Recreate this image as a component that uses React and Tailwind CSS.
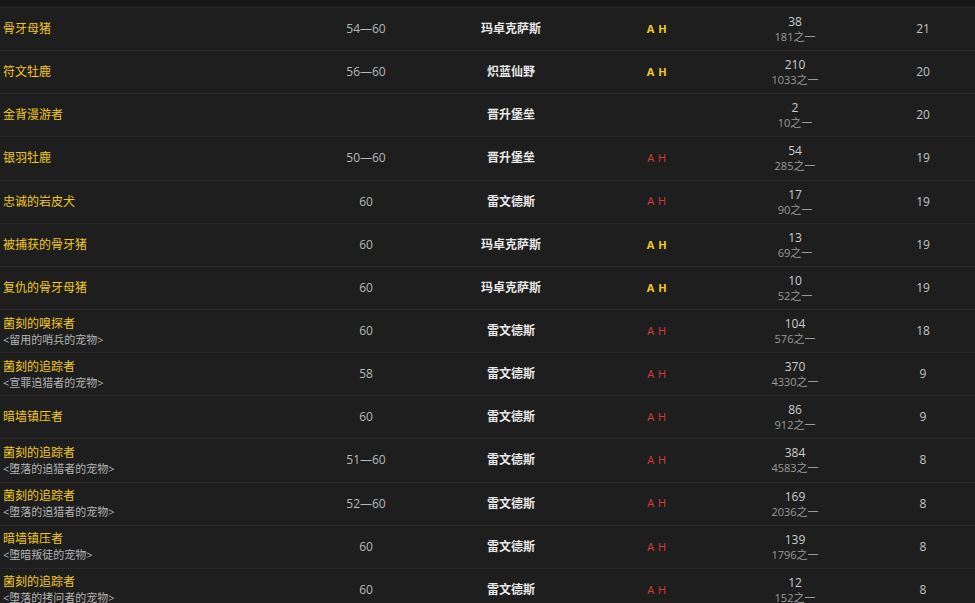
import React from "react";

const rows = [
  { name: "骨牙母猪", level: "54—60", zone: "玛卓克萨斯", ah: "y", count: "38", of: "181", rank: "21" },
  { name: "符文牡鹿", level: "56—60", zone: "炽蓝仙野", ah: "y", count: "210", of: "1033", rank: "20" },
  { name: "金背漫游者", level: "", zone: "晋升堡垒", ah: "", count: "2", of: "10", rank: "20" },
  { name: "银羽牡鹿", level: "50—60", zone: "晋升堡垒", ah: "r", count: "54", of: "285", rank: "19" },
  { name: "忠诚的岩皮犬", level: "60", zone: "雷文德斯", ah: "r", count: "17", of: "90", rank: "19" },
  { name: "被捕获的骨牙猪", level: "60", zone: "玛卓克萨斯", ah: "y", count: "13", of: "69", rank: "19" },
  { name: "复仇的骨牙母猪", level: "60", zone: "玛卓克萨斯", ah: "y", count: "10", of: "52", rank: "19" },
  { name: "菌刻的嗅探者", sub: "<留用的哨兵的宠物>", level: "60", zone: "雷文德斯", ah: "r", count: "104", of: "576", rank: "18" },
  { name: "菌刻的追踪者", sub: "<宣罪追猎者的宠物>", level: "58", zone: "雷文德斯", ah: "r", count: "370", of: "4330", rank: "9" },
  { name: "暗墙镇压者", level: "60", zone: "雷文德斯", ah: "r", count: "86", of: "912", rank: "9" },
  { name: "菌刻的追踪者", sub: "<堕落的追猎者的宠物>", level: "51—60", zone: "雷文德斯", ah: "r", count: "384", of: "4583", rank: "8" },
  { name: "菌刻的追踪者", sub: "<堕落的追猎者的宠物>", level: "52—60", zone: "雷文德斯", ah: "r", count: "169", of: "2036", rank: "8" },
  { name: "暗墙镇压者", sub: "<堕暗叛徒的宠物>", level: "60", zone: "雷文德斯", ah: "r", count: "139", of: "1796", rank: "8" },
  { name: "菌刻的追踪者", sub: "<堕落的拷问者的宠物>", level: "60", zone: "雷文德斯", ah: "r", count: "12", of: "152", rank: "8" },
];

function Row({ row }) {
  return (
    <div className="grid grid-cols-[290px_152px_138px_154px_122px_119px] h-[43.15px] items-center border-t border-[#292929]">
      <div className="pl-[3px] flex flex-col">
        <span className="text-[12px] leading-[16px] text-[#f2ca1c]">{row.name}</span>
        {row.sub && (
          <span className="text-[11px] leading-[15px] text-[#b4b4b4]">{row.sub}</span>
        )}
      </div>
      <div className="text-center text-[12px] text-[#b8b8b8]">{row.level}</div>
      <div className="text-center text-[12px] font-bold text-[#e8e8e8]">{row.zone}</div>
      <div
        className={
          row.ah === "y"
            ? "text-center text-[11px] font-bold tracking-[0.5px] text-[#f2ca1c]"
            : "text-center text-[11px] tracking-[0.5px] text-[#d83c3c]"
        }
      >
        {row.ah ? "A H" : ""}
      </div>
      <div className="flex flex-col items-center">
        <span className="text-[12px] leading-[15px] text-[#cccccc]">{row.count}</span>
        <span className="text-[11px] leading-[15px] text-[#9a9a9a]">{row.of}之一</span>
      </div>
      <div className="text-center pl-[15px] text-[12px] text-[#c4c4c4]">{row.rank}</div>
    </div>
  );
}

export default function App() {
  return (
    <div
      className="w-[975px] h-[603px] overflow-hidden bg-[#1e1e1e]"
      style={{ fontFamily: '"Open Sans", "Noto Sans CJK SC", sans-serif' }}
    >
      <div className="h-[7px] bg-[#181818]" />
      {rows.map((row, i) => (
        <Row key={i} row={row} />
      ))}
    </div>
  );
}
